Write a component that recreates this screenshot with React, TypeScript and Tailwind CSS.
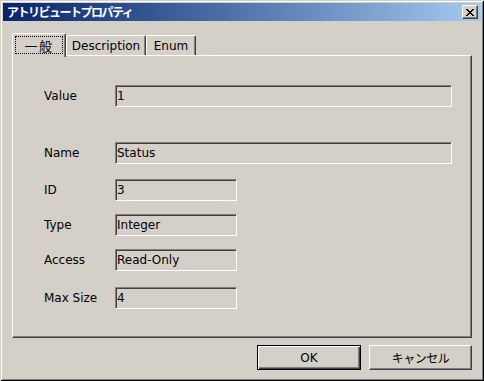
import React from "react";

const FONT = { fontFamily: '"DejaVu Sans", "Noto Sans CJK JP", sans-serif' };
const JP = { fontFamily: '"Noto Sans CJK JP", "DejaVu Sans", sans-serif' };

function Row({ label, value, wide, mtClass }: { label: string; value: string; wide?: boolean; mtClass: string }) {
  return (
    <div className={`flex items-center h-[22px] ${mtClass}`}>
      <div className="w-[71px] text-[12px] text-black leading-none">{label}</div>
      <div
        className={`${wide ? "w-[337px]" : "w-[122px]"} h-[22px] flex items-center border-t border-l border-t-[#808080] border-l-[#808080] border-b border-r border-b-white border-r-white shadow-[inset_1px_1px_0_#404040,inset_-1px_-1px_0_#d4d0c8] pl-[1px] text-[12px] text-black leading-none`}
      >
        {value}
      </div>
    </div>
  );
}

export default function App() {
  return (
    <div
      className="w-[484px] h-[381px] bg-[#d4d0c8] flex flex-col p-[3px] shadow-[inset_1px_1px_0_#d4d0c8,inset_-1px_-1px_0_#000,inset_2px_2px_0_#fff,inset_-2px_-2px_0_#808080] select-none"
      style={FONT}
    >
      {/* Title bar */}
      <div className="h-[18px] flex items-center bg-linear-to-r from-[#0a246a] to-[#a6caf0] pl-[4px]">
        <span className="text-white font-bold text-[12px] tracking-[-1.5px] leading-none" style={JP}>
          アトリビュートプロパティ
        </span>
        <div className="ml-auto mr-[3px] w-[16px] h-[14px] bg-[#d4d0c8] border-t border-l border-t-white border-l-white border-b border-r border-b-[#404040] border-r-[#404040] shadow-[inset_-1px_-1px_0_#808080] flex items-center justify-center">
          <svg width="8" height="7" viewBox="0 0 8 7" shapeRendering="crispEdges">
            <path d="M0 0h2v1h-2z M6 0h2v1h-2z M1 1h2v1h-2z M5 1h2v1h-2z M2 2h4v1h-4z M3 3h2v1h-2z M2 4h4v1h-4z M1 5h2v1h-2z M5 5h2v1h-2z M0 6h2v1h-2z M6 6h2v1h-2z" fill="#000" />
          </svg>
        </div>
      </div>

      {/* Content */}
      <div className="flex-1 flex flex-col px-[9px] pt-[12px]">
        {/* Tabs */}
        <div className="h-[22px] flex items-end relative z-10">
          <div className="w-[54px] h-[24px] -mb-[2px] bg-[#d4d0c8] border-t border-l border-t-white border-l-white border-r border-r-[#404040] shadow-[inset_-1px_0_0_#808080] rounded-t-[2px] flex items-start pt-[2px] pl-[2px]">
            <div className="w-[48px] h-[18px] border border-dotted border-black flex items-center justify-center text-[13px] tracking-[1.5px] leading-none text-black" style={JP}>
              一般
            </div>
          </div>
          <div className="w-[80px] h-[20px] bg-[#d4d0c8] border-t border-l border-t-white border-l-white border-r border-r-[#404040] shadow-[inset_-1px_0_0_#808080] rounded-t-[2px] flex items-center justify-center text-[12px] leading-none text-black">
            Description
          </div>
          <div className="w-[50px] h-[20px] bg-[#d4d0c8] border-t border-l border-t-white border-l-white border-r border-r-[#404040] shadow-[inset_-1px_0_0_#808080] rounded-t-[2px] flex items-center justify-center text-[12px] leading-none text-black">
            Enum
          </div>
        </div>

        {/* Panel */}
        <div className="h-[283px] border-t border-l border-t-white border-l-white border-b border-r border-b-[#404040] border-r-[#404040] shadow-[inset_-1px_-1px_0_#808080] pl-[31px] pt-[29px] flex flex-col">
          <Row label="Value" value="1" wide mtClass="mt-0" />
          <Row label="Name" value="Status" wide mtClass="mt-[35px]" />
          <Row label="ID" value="3" mtClass="mt-[15px]" />
          <Row label="Type" value="Integer" mtClass="mt-[13px]" />
          <Row label="Access" value="Read-Only" mtClass="mt-[13px]" />
          <Row label="Max Size" value="4" mtClass="mt-[16px]" />
        </div>

        {/* Buttons */}
        <div className="mt-[7px] flex justify-end gap-[8px]">
          <div className="w-[104px] h-[25px] border border-black bg-[#d4d0c8] shadow-[inset_1px_1px_0_#fff,inset_-1px_-1px_0_#404040,inset_-2px_-2px_0_#808080] flex items-center justify-center text-[12px] leading-none text-black">
            OK
          </div>
          <div className="w-[103px] h-[25px] border-t border-l border-t-white border-l-white border-b border-r border-b-[#404040] border-r-[#404040] bg-[#d4d0c8] shadow-[inset_-1px_-1px_0_#808080] flex items-center justify-center text-[12px] tracking-[-0.5px] leading-none text-black" style={JP}>
            キャンセル
          </div>
        </div>
      </div>
    </div>
  );
}
